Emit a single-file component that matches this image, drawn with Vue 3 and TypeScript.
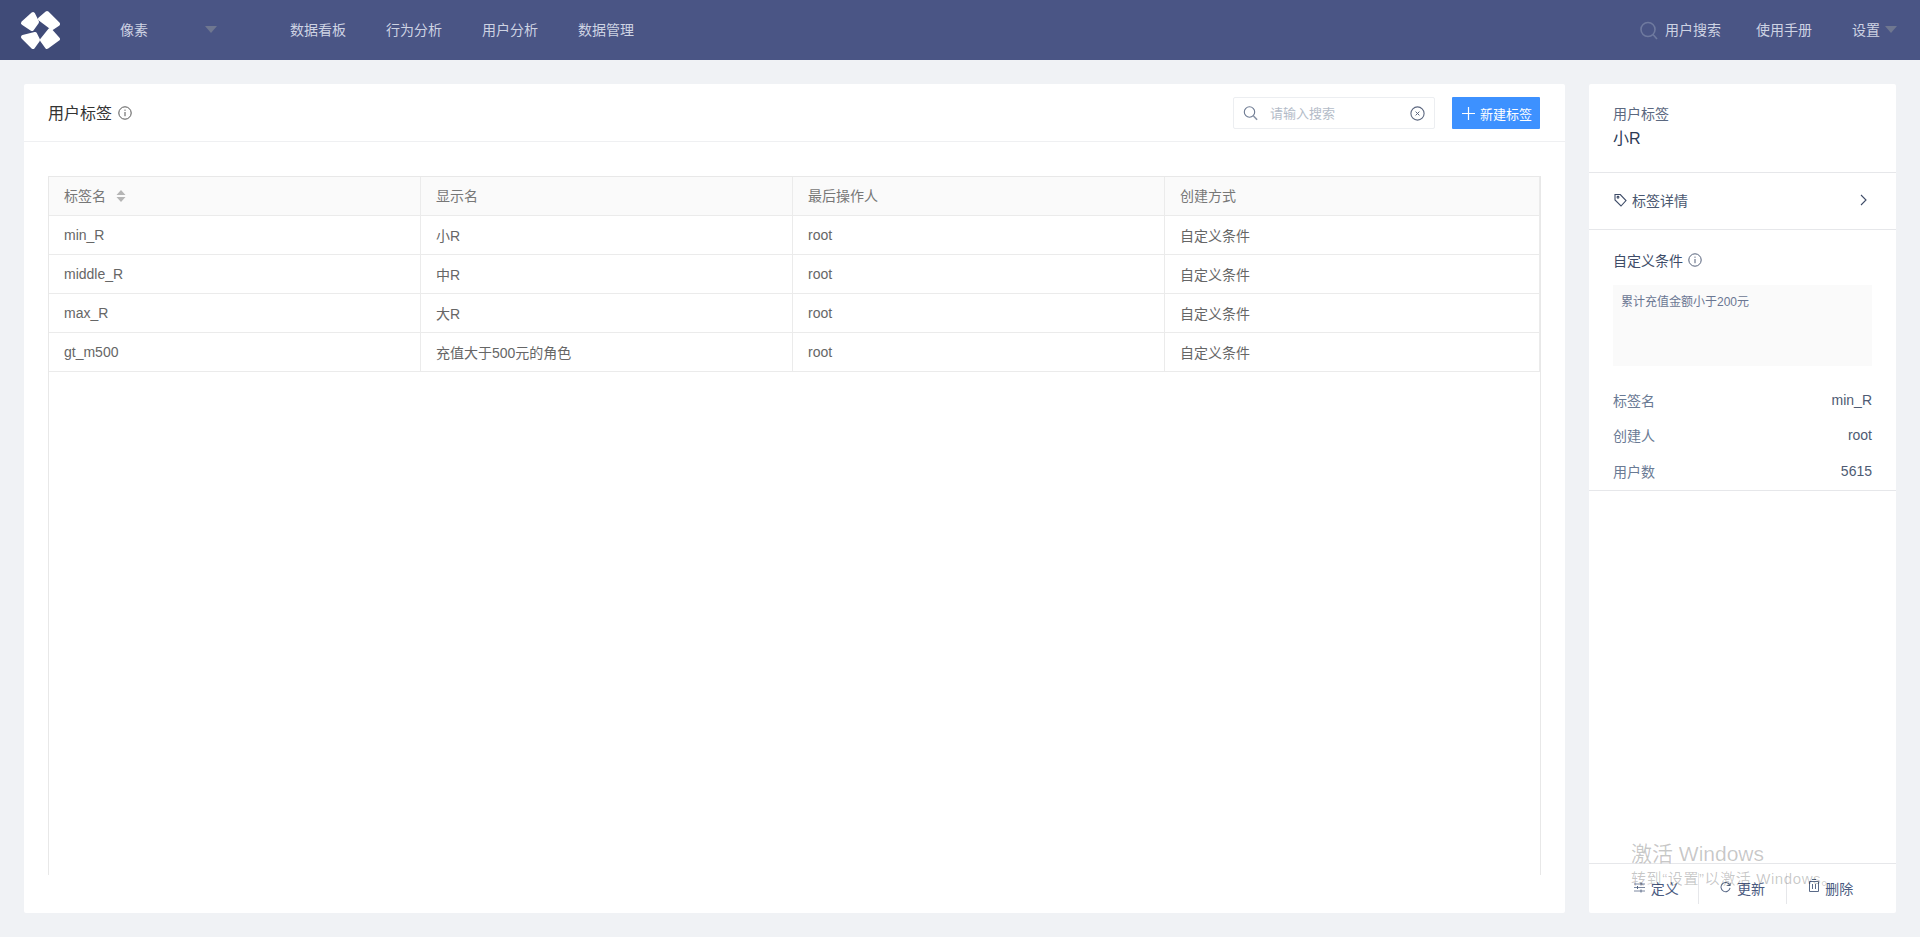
<script setup lang="ts">
interface Row { name: string; display: string; operator: string; method: string }
const nav: string[] = ['数据看板', '行为分析', '用户分析', '数据管理']
const columns: string[] = ['标签名', '显示名', '最后操作人', '创建方式']
const rows: Row[] = [
  { name: 'min_R', display: '小R', operator: 'root', method: '自定义条件' },
  { name: 'middle_R', display: '中R', operator: 'root', method: '自定义条件' },
  { name: 'max_R', display: '大R', operator: 'root', method: '自定义条件' },
  { name: 'gt_m500', display: '充值大于500元的角色', operator: 'root', method: '自定义条件' }
]
const meta = [
  { label: '标签名', value: 'min_R' },
  { label: '创建人', value: 'root' },
  { label: '用户数', value: '5615' }
]
</script>

<template>
  <div class="page">
    <header class="topbar">
      <div class="logo">
        <svg width="40" height="41" viewBox="20 10 40 41">
          <g fill="#fff" stroke="#fff" stroke-width="4" stroke-linejoin="round">
            <polygon points="33,14 37,22 32,29 23,23" />
            <polygon points="47,13 58,24 52,28 40,19" />
            <polygon points="23,37 35,34 38,40 33,47" />
            <polygon points="50,30 58,39 47,47 42,40" />
          </g>
        </svg>
      </div>
      <div class="project">
        <span>像素</span>
        <i class="caret project-caret"></i>
      </div>
      <nav class="nav">
        <a v-for="item in nav" :key="item">{{ item }}</a>
      </nav>
      <div class="top-right">
        <svg class="top-search" width="18" height="20" viewBox="0 0 18 20" fill="none" stroke="#6f7a9f" stroke-width="1.6">
          <circle cx="8" cy="8.5" r="7" />
          <path d="M13 13.5l4 4.5" />
        </svg>
        <a class="search-link">用户搜索</a>
        <a class="manual">使用手册</a>
        <a class="settings">设置</a>
        <i class="caret settings-caret"></i>
      </div>
    </header>

    <main class="content">
      <section class="card main-card">
        <div class="card-head">
          <h1 class="title">用户标签</h1>
          <svg class="info title-info" width="14" height="14" viewBox="0 0 14 14" fill="none" stroke="#555">
            <circle cx="7" cy="7" r="6.2" />
            <path d="M7 6v4.2M7 3.6v1.2" />
          </svg>
          <div class="search">
            <svg width="16" height="15" viewBox="0 0 16 15" fill="none" stroke="#6d7a92" stroke-width="1.1">
              <circle cx="6.5" cy="6" r="5.2" />
              <path d="M10.5 10l3.6 3.8" stroke="#8a94a6" stroke-width="1.6" />
            </svg>
            <input class="search-input" type="text" placeholder="请输入搜索" />
            <svg width="15" height="15" viewBox="0 0 15 15" fill="none" stroke="#5d6880">
              <circle cx="7.5" cy="7.5" r="6.6" stroke-width="1.1" />
              <path d="M5.6 5.6l3.8 3.8M9.4 5.6l-3.8 3.8" />
            </svg>
          </div>
          <button class="create" type="button">
            <svg width="13" height="13" viewBox="0 0 13 13" stroke="#fff" stroke-width="1.2">
              <path d="M6.5 0v13M0 6.5h13" />
            </svg>
            <span>新建标签</span>
          </button>
        </div>
        <div class="table-wrap">
          <table class="table">
            <thead>
              <tr>
                <th v-for="(col, i) in columns" :key="col">
                  <span>{{ col }}</span>
                  <svg v-if="i === 0" class="sort" width="10" height="12" viewBox="0 0 10 12" fill="#b5b5b5">
                    <path d="M5 0l4.5 5h-9zM5 12L.5 7h9z" />
                  </svg>
                </th>
              </tr>
            </thead>
            <tbody>
              <tr v-for="row in rows" :key="row.name">
                <td>{{ row.name }}</td>
                <td>{{ row.display }}</td>
                <td>{{ row.operator }}</td>
                <td>{{ row.method }}</td>
              </tr>
            </tbody>
          </table>
        </div>
      </section>

      <aside class="card side">
        <div class="side-head">
          <div class="side-label">用户标签</div>
          <div class="side-name">小R</div>
        </div>
        <div class="side-detail">
          <svg width="13" height="14" viewBox="0 0 13 14" fill="none" stroke="#3e4c68" stroke-width="1.1">
            <path d="M1 1.5h5.3l5.7 6-5 5.5-6-6z" />
            <circle cx="4" cy="4.3" r="0.9" />
          </svg>
          <span class="detail-text">标签详情</span>
          <svg class="chevron" width="7" height="12" viewBox="0 0 7 12" fill="none" stroke="#3e4c68" stroke-width="1.1">
            <path d="M1 1l5 5-5 5" />
          </svg>
        </div>
        <div class="side-body">
          <div class="cond-title">
            <span>自定义条件</span>
            <svg width="14" height="14" viewBox="0 0 14 14" fill="none" stroke="#55617a">
              <circle cx="7" cy="7" r="6.2" />
              <path d="M7 6v4.2M7 3.6v1.2" />
            </svg>
          </div>
          <div class="cond-box">累计充值金额小于200元</div>
          <div class="meta">
            <div v-for="m in meta" :key="m.label" class="meta-row">
              <span class="meta-label">{{ m.label }}</span>
              <span class="meta-value">{{ m.value }}</span>
            </div>
          </div>
        </div>
        <div class="side-spacer"></div>
        <div class="side-foot">
          <a class="foot-item">
            <svg width="11" height="11" viewBox="0 0 11 11" fill="none" stroke="#5a6a88">
              <path d="M0 2h11M0 5.5h11M0 9h11" stroke-width="0.8" />
              <path d="M7 .5v3M3.5 4v3M7 7.5v3" />
            </svg>
            <span>定义</span>
          </a>
          <a class="foot-item">
            <svg width="11" height="11" viewBox="0 0 12 12" fill="none" stroke="#5a6a88" stroke-width="1.1">
              <path d="M10.6 3.4A5 5 0 1 0 11 6.5" />
              <path d="M11 .8v3h-3" />
            </svg>
            <span>更新</span>
          </a>
          <a class="foot-item last">
            <svg class="trash" width="10" height="13" viewBox="0 0 10 13" fill="none" stroke="#5a6a88">
              <path d="M.5 2.5h9v10h-9zM3 .5h4M3.5 5v5M6.5 5v5" />
            </svg>
            <span>删除</span>
          </a>
        </div>
      </aside>
    </main>

    <div class="watermark">
      <div class="wm-title">激活 Windows</div>
      <div class="wm-sub">转到“设置”以激活 Windows。</div>
    </div>
  </div>
</template>

<style scoped>
.page {
  position: relative;
  height: 937px;
  overflow: hidden;
  display: flex;
  flex-direction: column;
  background: #f0f2f5;
  font-family: "Liberation Sans", "Noto Sans CJK SC", sans-serif;
  font-size: 14px;
  color: #666;
}
.topbar {
  height: 60px;
  flex: none;
  display: flex;
  align-items: center;
  background: #4a5585;
  color: #ced3e3;
}
.logo {
  width: 80px;
  height: 60px;
  flex: none;
  display: flex;
  align-items: center;
  justify-content: center;
  background: #404b78;
}
.project {
  width: 210px;
  flex: none;
  box-sizing: border-box;
  padding-left: 40px;
  padding-bottom: 2px;
  display: flex;
  align-items: center;
}
.caret {
  display: block;
  width: 0;
  height: 0;
  border-left: 6px solid transparent;
  border-right: 6px solid transparent;
  border-top: 7px solid #6f7790;
}
.project-caret {
  margin-left: 57px;
}
.nav {
  display: flex;
  gap: 40px;
  padding-bottom: 2px;
}
.top-right {
  margin-left: auto;
  margin-right: 23px;
  padding-bottom: 2px;
  display: flex;
  align-items: center;
}
.top-search {
  margin-top: 3px;
}
.search-link {
  margin-left: 7px;
}
.manual {
  margin-left: 35px;
}
.settings {
  margin-left: 40px;
}
.settings-caret {
  margin-left: 5px;
}
.content {
  flex: 1;
  min-height: 0;
  display: flex;
  gap: 24px;
  padding: 24px;
}
.card {
  background: #fff;
  border-radius: 2px;
  display: flex;
  flex-direction: column;
}
.main-card {
  flex: 1;
  min-width: 0;
}
.card-head {
  height: 58px;
  flex: none;
  box-sizing: border-box;
  padding: 1px 25px 0 24px;
  display: flex;
  align-items: center;
  border-bottom: 1px solid #eff0f2;
}
.title {
  margin: 0 0 2px;
  font-size: 16px;
  font-weight: 400;
  color: #333;
}
.title-info {
  margin-left: 6px;
}
.search {
  margin-left: auto;
  width: 202px;
  height: 32px;
  box-sizing: border-box;
  padding: 0 9px;
  display: flex;
  align-items: center;
  border: 1px solid #eceef1;
  border-radius: 2px;
}
.search-input {
  flex: 1;
  min-width: 0;
  border: 0;
  outline: 0;
  padding: 0 0 0 11px;
  font: inherit;
  font-size: 13px;
  background: transparent;
}
.search-input::placeholder {
  color: #b4bcc8;
}
.create {
  width: 88px;
  height: 32px;
  margin-left: 17px;
  padding: 0 0 0 10px;
  display: flex;
  align-items: center;
  gap: 5px;
  border: 0;
  border-radius: 1px;
  background: #3d91ff;
  color: #fff;
  font: inherit;
  font-size: 13px;
}
.table-wrap {
  flex: 1;
  min-height: 0;
  margin: 34px 24px 38px;
  border: 1px solid #e8e8e8;
  border-bottom: 0;
}
.table {
  width: 100%;
  table-layout: fixed;
  border-collapse: separate;
  border-spacing: 0;
}
.table th,
.table td {
  height: 38px;
  padding: 0 15px;
  box-sizing: content-box;
  text-align: left;
  font-weight: 400;
  border-right: 1px solid #ebebeb;
  border-bottom: 1px solid #ebebeb;
  white-space: nowrap;
}
.table th:nth-child(-n + 3),
.table td:nth-child(-n + 3) {
  width: 341px;
}
.table th {
  height: 36px;
  padding-bottom: 2px;
  background: #fafafa;
  color: #777;
}
.table td {
  color: #666;
}
.sort {
  margin-left: 10px;
  vertical-align: -1px;
}
.side {
  width: 307px;
  flex: none;
}
.side-head {
  height: 89px;
  flex: none;
  box-sizing: border-box;
  padding: 20px 24px 0;
  border-bottom: 1px solid #e6e7ea;
}
.side-label {
  line-height: 20px;
  color: #5b6880;
}
.side-name {
  margin-top: 5px;
  line-height: 20px;
  font-size: 16px;
  color: #2c3a55;
}
.side-detail {
  height: 57px;
  flex: none;
  box-sizing: border-box;
  padding: 0 29px 2px 25px;
  display: flex;
  align-items: center;
  border-bottom: 1px solid #e6e7ea;
}
.detail-text {
  margin-left: 5px;
  color: #4a5870;
}
.chevron {
  margin-left: auto;
}
.side-body {
  flex: none;
  box-sizing: border-box;
  padding: 20px 24px 1px;
  border-bottom: 1px solid #e6e7ea;
}
.cond-title {
  display: flex;
  align-items: center;
  gap: 5px;
  height: 20px;
  color: #3e4c68;
}
.cond-box {
  height: 81px;
  margin-top: 15px;
  box-sizing: border-box;
  padding: 8px 8px 0;
  background: #fafafa;
  font-size: 12px;
  line-height: 18px;
  color: #6a7692;
}
.meta {
  margin-top: 16px;
}
.meta-row {
  display: flex;
  justify-content: space-between;
  align-items: center;
  height: 35.5px;
}
.meta-label {
  color: #6a7a94;
}
.meta-value {
  color: #4e5b73;
}
.side-spacer {
  flex: 1;
}
.side-foot {
  height: 50px;
  flex: none;
  box-sizing: border-box;
  padding: 9px 21px 9px 30px;
  display: flex;
  border-top: 1px solid #e6e7ea;
}
.foot-item {
  width: 88px;
  padding-bottom: 2px;
  display: flex;
  align-items: center;
  justify-content: center;
  gap: 6px;
  border-right: 1px solid #e6e7ea;
  color: #4a5a80;
}
.foot-item:first-child {
  width: 80px;
  padding-right: 4px;
  box-sizing: border-box;
}
.foot-item.last {
  border-right: 0;
}
.trash {
  margin-top: -4px;
}
.watermark {
  position: absolute;
  left: 1631px;
  top: 841px;
  pointer-events: none;
  color: rgba(0, 0, 0, 0.22);
}
.wm-title {
  font-size: 21px;
  line-height: 26px;
}
.wm-sub {
  margin-top: 2px;
  font-size: 15px;
  line-height: 20px;
  letter-spacing: 0.6px;
}
</style>
